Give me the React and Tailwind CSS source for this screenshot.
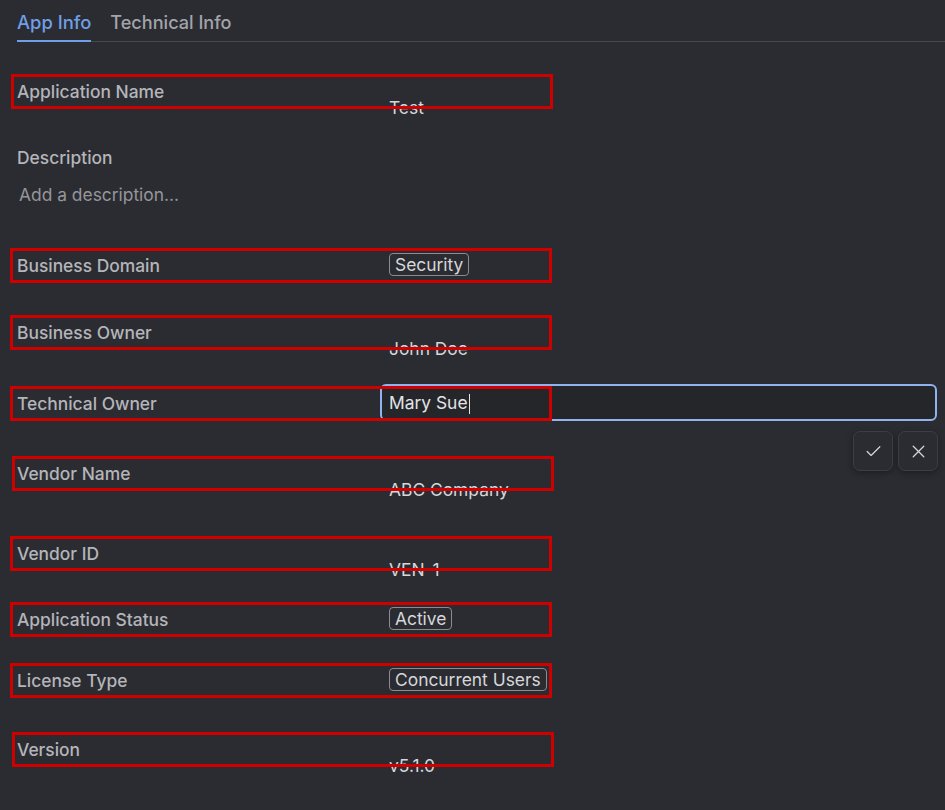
import React from "react";
import { Check, X } from "lucide-react";

const font = { fontFamily: "Inter, 'Noto Sans', sans-serif" };

function Row({ label, className = "", box = "left-0", children }) {
  return (
    <div className={"relative flex w-[542px] h-[35px] shrink-0 " + className}>
      <div className="w-[379px] shrink-0 pl-[7px] pt-[6px] leading-6 text-[17.4px] font-medium text-[#b4b5ba] whitespace-nowrap">
        {label}
      </div>
      <div className="relative flex-1">{children}</div>
      <div className={"pointer-events-none absolute top-0 h-[35px] w-[542px] border-[3px] border-[#d00000] " + box} />
    </div>
  );
}

function Plain({ children }) {
  return (
    <div className="mt-[22px] leading-6 text-[17.4px] text-[#d6d7da] whitespace-nowrap">{children}</div>
  );
}

function Badge({ children }) {
  return (
    <div className="mt-[5px] inline-flex h-[23px] items-center rounded-[4px] border border-[#8b8c91] px-[5px] text-[17.4px] leading-none text-[#d6d7da] whitespace-nowrap">
      {children}
    </div>
  );
}

export default function App() {
  return (
    <div className="min-h-[810px] w-[945px] overflow-hidden bg-[#2b2c31]" style={font}>
      <div className="ml-[17px] flex h-[42px] gap-[19px] border-b border-[#47484d]">
        <div className="relative pt-[10px] text-[18.4px] font-medium leading-6 text-[#6f9fe8]">
          App Info
          <div className="absolute bottom-[-1px] left-0 right-0 h-[2px] bg-[#6f9fe8]" />
        </div>
        <div className="pt-[10px] text-[18.1px] font-medium leading-6 text-[#a3a4a9]">Technical Info</div>
      </div>

      <div className="flex flex-col pl-[10px]">
        <Row label="Application Name" className="mt-[32px]" box="left-[1px]">
          <Plain>Test</Plain>
        </Row>

        <div className="mt-[37px] pl-[7px] text-[17.4px] font-medium leading-6 text-[#b4b5ba]">Description</div>
        <div className="mt-[13px] pl-[9px] text-[17.4px] leading-6 text-[#95969b]">Add a description...</div>

        <Row label="Business Domain" className="mt-[41px]">
          <Badge>Security</Badge>
        </Row>

        <Row label="Business Owner" className="mt-[32px]">
          <Plain>John Doe</Plain>
        </Row>

        <Row label="Technical Owner" className="mt-[36px] z-10">
          <div className="absolute left-[-9px] top-[-2px] flex h-[37px] w-[557px] items-center rounded-[6px] border-2 border-[#8fb3ee] bg-[#25262a] pl-[7px] pt-[2px] text-[17.4px] text-[#e2e3e6]">
            Mary Sue
            <span className="ml-[1px] inline-block h-[20px] w-px bg-[#e2e3e6]" />
          </div>
        </Row>

        <div className="relative h-0">
          <div className="absolute left-[843px] top-[10px] flex gap-[5px]">
            <div className="flex h-[40px] w-[40px] items-center justify-center rounded-[7px] border border-[#3d3e43] bg-[#2b2c31] shadow-[0_2px_6px_rgba(0,0,0,0.35)]">
              <Check size={19} strokeWidth={1.5} color="#d6d7da" />
            </div>
            <div className="flex h-[40px] w-[40px] items-center justify-center rounded-[7px] border border-[#3d3e43] bg-[#2b2c31] shadow-[0_2px_6px_rgba(0,0,0,0.35)]">
              <X size={21} strokeWidth={1.5} color="#d6d7da" />
            </div>
          </div>
        </div>

        <Row label="Vendor Name" className="mt-[35px]" box="left-[2px]">
          <Plain>ABC Company</Plain>
        </Row>

        <Row label="Vendor ID" className="mt-[45px]">
          <Plain>VEN-1</Plain>
        </Row>

        <Row label="Application Status" className="mt-[31px]">
          <Badge>Active</Badge>
        </Row>

        <Row label="License Type" className="mt-[26px]">
          <Badge>Concurrent Users</Badge>
        </Row>

        <Row label="Version" className="mt-[34px]" box="left-[2px]">
          <Plain>v5.1.0</Plain>
        </Row>
      </div>
    </div>
  );
}
